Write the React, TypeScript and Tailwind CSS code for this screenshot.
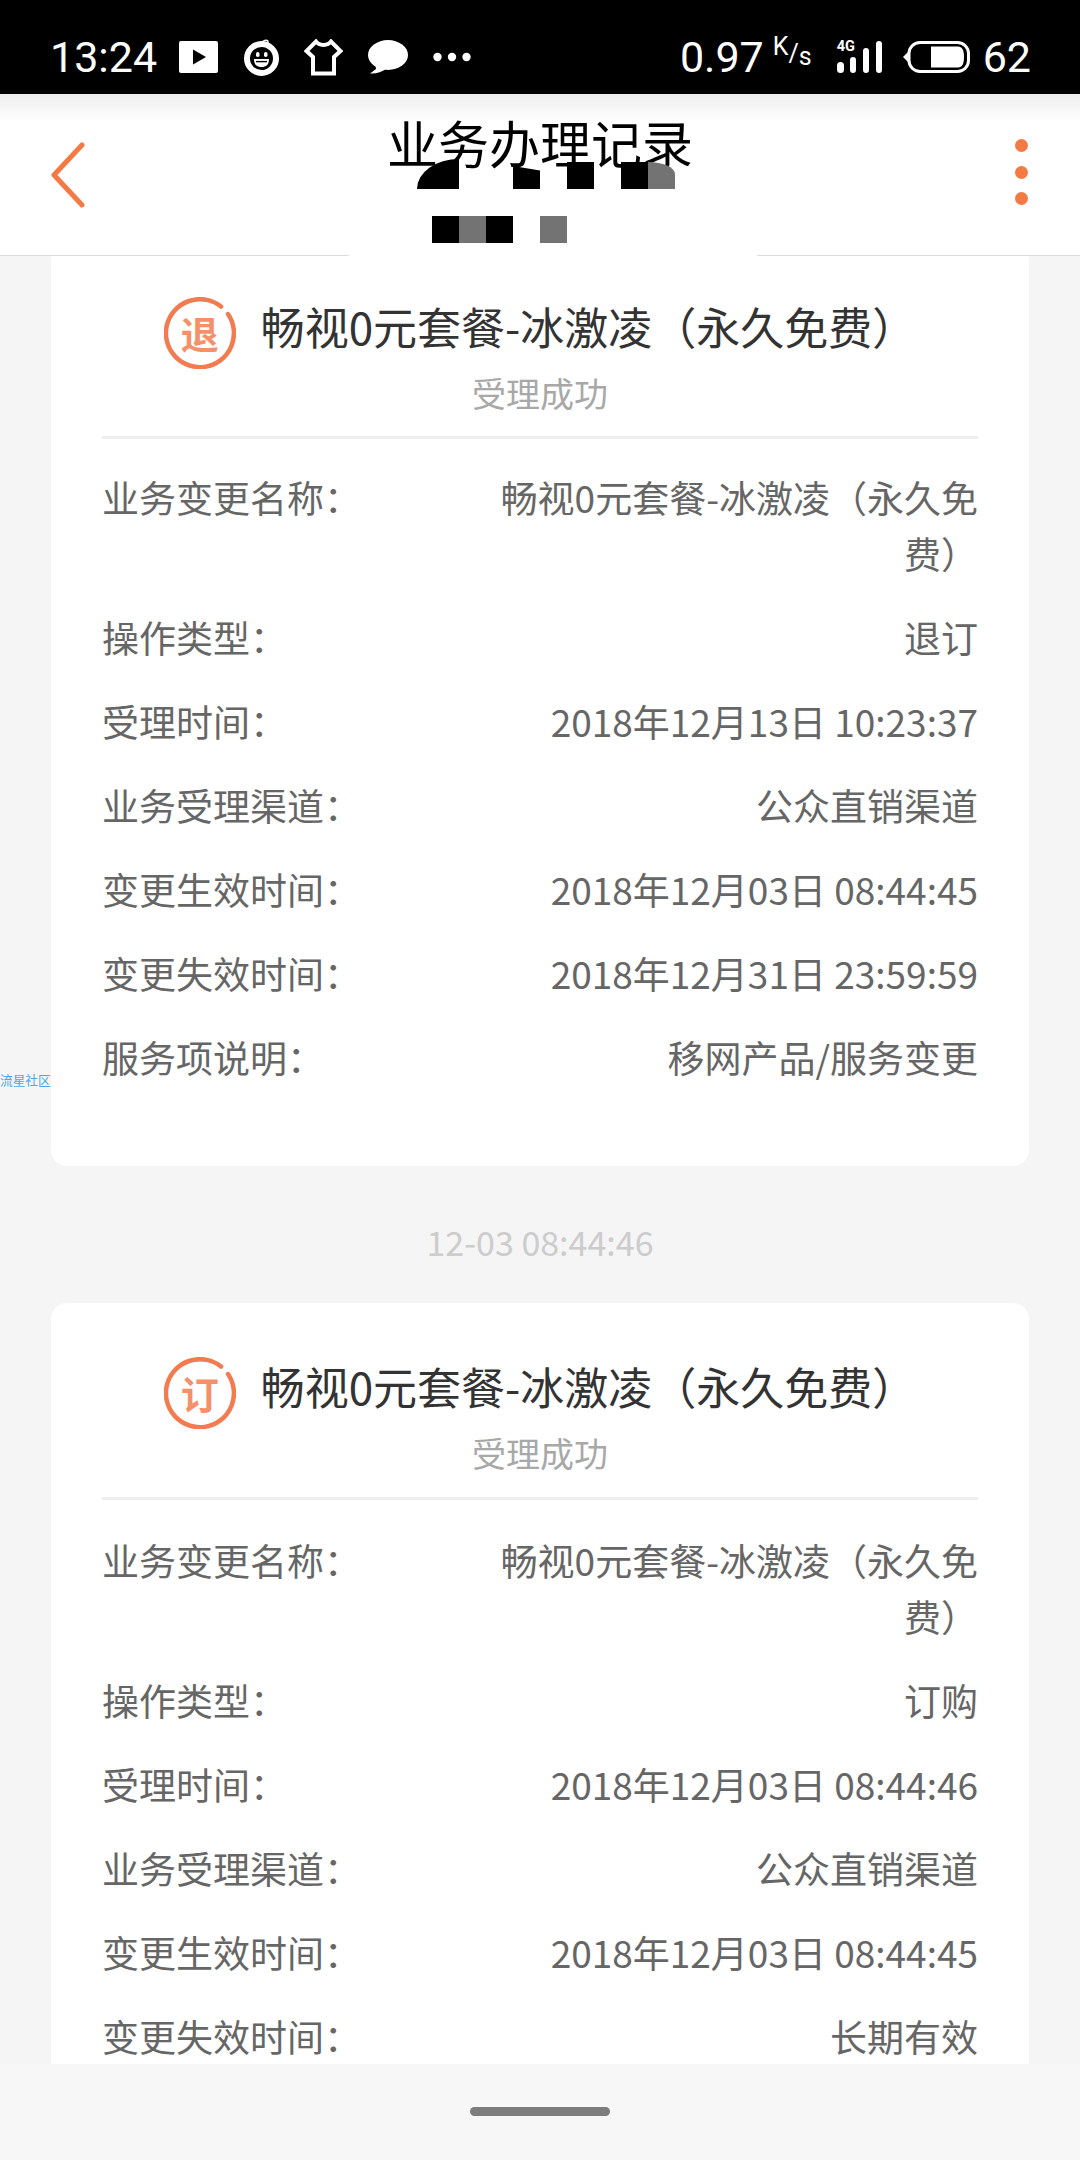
const cjk = "font-['Noto_Sans_CJK_SC','Noto_Sans',sans-serif]";

type Row = { label: string; value: string };

const firstRows: Row[] = [
  { label: '业务变更名称：', value: '畅视0元套餐-冰激凌（永久免费）' },
  { label: '操作类型：', value: '退订' },
  { label: '受理时间：', value: '2018年12月13日 10:23:37' },
  { label: '业务受理渠道：', value: '公众直销渠道' },
  { label: '变更生效时间：', value: '2018年12月03日 08:44:45' },
  { label: '变更失效时间：', value: '2018年12月31日 23:59:59' },
  { label: '服务项说明：', value: '移网产品/服务变更' },
];

const secondRows: Row[] = [
  { label: '业务变更名称：', value: '畅视0元套餐-冰激凌（永久免费）' },
  { label: '操作类型：', value: '订购' },
  { label: '受理时间：', value: '2018年12月03日 08:44:46' },
  { label: '业务受理渠道：', value: '公众直销渠道' },
  { label: '变更生效时间：', value: '2018年12月03日 08:44:45' },
  { label: '变更失效时间：', value: '长期有效' },
];

function Badge({ text }: { text: string }) {
  return (
    <div className="relative mt-[10px] w-[72px] h-[72px] flex items-center justify-center shrink-0">
      <svg className="absolute inset-0" width="72" height="72" viewBox="0 0 72 72" fill="none">
        <path d="M57 9.5 A34 34 0 1 0 64 17" stroke="#f27c50" strokeWidth="4.5" strokeLinecap="round" />
      </svg>
      <span className="text-[38px] leading-none font-bold text-[#f4916b]">{text}</span>
    </div>
  );
}

function Card({ badge, rows, second }: { badge: string; rows: Row[]; second?: boolean }) {
  return (
    <div className="bg-white rounded-[16px] px-[51px] pt-[49px] pb-[81px]">
      <div className="flex items-center justify-center gap-[25px] h-[72px]">
        <Badge text={badge} />
        <span className="mb-[4px] text-[44px] leading-[56px] text-[#333333]">畅视0元套餐-冰激凌（永久免费）</span>
      </div>
      <div className="mt-[5px] text-center text-[34px] leading-[48px] text-[#a8a8a8]">受理成功</div>
      <div className={second ? 'mt-[20px] h-[3px] bg-[#eeeeee]' : 'mt-[19px] h-[3px] bg-[#eeeeee]'} />
      <div className={second ? 'mt-[32px] flex flex-col gap-[28px]' : 'mt-[30px] flex flex-col gap-[28px]'}>
        {rows.map((row) => (
          <div key={row.label} className="flex justify-between text-[37px] leading-[56px] text-[#666666]">
            <span className="shrink-0">{row.label}</span>
            <span className="w-[490px] text-right">{row.value}</span>
          </div>
        ))}
      </div>
    </div>
  );
}

function StatusBar() {
  return (
    <div className="h-[94px] bg-black flex items-center justify-between pl-[50px] pr-[49px] pt-[20px] text-white font-['Roboto',sans-serif] text-[43px] leading-none">
      <div className="flex items-center">
        <span>13:24</span>
        <svg className="ml-[22px]" width="39" height="32" viewBox="0 0 39 32">
          <rect width="39" height="32" rx="2" fill="#fff" />
          <path d="M14 8.5 L27 16 L14 23.5 Z" fill="#000" />
        </svg>
        <svg className="ml-[25px]" width="37" height="37" viewBox="0 0 37 37" fill="none">
          <circle cx="18.5" cy="19.5" r="14.5" stroke="#fff" strokeWidth="6" />
          <path d="M17 5 C19 1 25 0 25 3 C25 5 22 5 22 3" stroke="#fff" strokeWidth="1.5" />
          <rect x="13" y="13" width="3.5" height="5" rx="1.7" fill="#fff" />
          <rect x="21" y="13" width="3.5" height="5" rx="1.7" fill="#fff" />
          <path d="M11 20 H26 C26 26 23 28 18.5 28 C14 28 11 26 11 20 Z" fill="#fff" />
          <path d="M13 22.6 H24" stroke="#000" strokeWidth="1.4" />
        </svg>
        <svg className="ml-[24px]" width="39" height="37" viewBox="0 0 39 37" fill="none">
          <path d="M12 2.5 C15 7 24 7 27 2.5 L36.5 12 L30 18 V34.5 H9 V18 L2.5 12 Z" stroke="#fff" strokeWidth="4" />
        </svg>
        <svg className="ml-[25px]" width="40" height="34" viewBox="0 0 40 34">
          <ellipse cx="20" cy="15" rx="20" ry="15" fill="#fff" />
          <path d="M7 23 L8 29 L2 33.5 C8 34 14 32 18 29 Z" fill="#fff" />
        </svg>
        <svg className="ml-[25px]" width="38" height="10" viewBox="0 0 38 10">
          <circle cx="4.5" cy="5" r="4.2" fill="#fff" />
          <circle cx="19" cy="5" r="4.2" fill="#fff" />
          <circle cx="33.5" cy="5" r="4.2" fill="#fff" />
        </svg>
      </div>
      <div className="flex items-center">
        <span>0.97</span>
        <span className="ml-[9px] text-[25px] relative -top-[4px]">
          <span className="relative -top-[7px]">K</span>/<span className="relative top-[3px]">s</span>
        </span>
        <div className="relative ml-[25px] w-[45px] h-[33px]">
          <span className="absolute left-0 top-0 text-[14.5px] leading-[12px] font-bold">4G</span>
          <svg className="absolute inset-0" width="45" height="33" viewBox="0 0 45 33">
            <rect x="0" y="21" width="7" height="11" rx="3.5" fill="#fff" />
            <rect x="13" y="16" width="6" height="16" rx="3" fill="#fff" />
            <rect x="26" y="7" width="6" height="25" rx="3" fill="#fff" />
            <rect x="39" y="0" width="6" height="32" rx="3" fill="#fff" />
          </svg>
        </div>
        <svg className="ml-[20px]" width="68" height="32" viewBox="0 0 68 32" fill="none">
          <rect x="7" y="1.5" width="59.5" height="29" rx="11" stroke="#fff" strokeWidth="3" />
          <path d="M6 11 L1 16 L6 21 Z" fill="#fff" />
          <path d="M29 5.5 H56 C60 5.5 62 9 62 16 C62 23 60 26.5 56 26.5 H29 Z" fill="#fff" />
        </svg>
        <span className="ml-[13px]">62</span>
      </div>
    </div>
  );
}

function NavBar() {
  return (
    <div className="relative h-[162px] bg-white border-b border-[#dddddd] grid grid-cols-[1fr_auto_1fr] items-center px-[49px]">
      <div className="absolute inset-x-0 top-0 h-[28px] bg-gradient-to-b from-[#eeeeee] to-white" />
      <svg width="36" height="66" viewBox="0 0 36 66" fill="none">
        <path d="M33 3 L5 33 L33 63" stroke="#f47a45" strokeWidth="5" strokeLinecap="round" strokeLinejoin="round" />
      </svg>
      <div className="relative self-start pt-[18px] text-[51px] leading-[60px] text-black">业务办理记录</div>
      <div className="justify-self-end pr-[3px] flex flex-col gap-[13.5px] -mt-[5px]">
        <div className="w-[13px] h-[13px] rounded-full bg-[#f47a45]" />
        <div className="w-[13px] h-[13px] rounded-full bg-[#f47a45]" />
        <div className="w-[13px] h-[13px] rounded-full bg-[#f47a45]" />
      </div>
    </div>
  );
}

// blocks that censor the account number under the title
function Mosaic() {
  return (
    <div className="absolute left-[349px] top-[159px] w-[408px] h-[99px]">
      <div className="absolute left-0 right-0 top-[57px] h-[42px] bg-white" />
      <div className="absolute left-[68px] top-0 w-[42px] h-[30px] bg-black rounded-tl-[100%]" />
      <div className="absolute left-[164px] top-[7px] w-[27px] h-[23px] bg-black [clip-path:polygon(0_0,100%_20%,100%_100%,0_100%)]" />
      <div className="absolute left-[218px] top-[3px] w-[27px] h-[27px] bg-black" />
      <div className="absolute left-[272px] top-[3px] w-[27px] h-[27px] bg-black" />
      <div className="absolute left-[299px] top-[3px] w-[27px] h-[27px] bg-[#737373] rounded-tr-[100%_45%]" />
      <div className="absolute left-[83px] top-[57px] w-[27px] h-[27px] bg-black" />
      <div className="absolute left-[110px] top-[57px] w-[27px] h-[27px] bg-[#737373]" />
      <div className="absolute left-[137px] top-[57px] w-[27px] h-[27px] bg-black" />
      <div className="absolute left-[191px] top-[57px] w-[27px] h-[27px] bg-[#737373]" />
    </div>
  );
}

export default function App() {
  return (
    <div className={`relative w-[1080px] h-[2160px] overflow-hidden flex flex-col bg-[#f5f5f5] ${cjk}`}>
      <StatusBar />
      <NavBar />
      <Mosaic />

      <div className="flex-1 overflow-hidden px-[51px]">
        <div className="-mt-[13px]">
          <Card badge="退" rows={firstRows} />
          <div className="h-[137px] pt-[15px] flex items-center justify-center text-[34px] leading-none text-[#cccccc]">
            12-03 08:44:46
          </div>
          <Card badge="订" rows={secondRows} second />
        </div>
      </div>

      <div className="h-[96px] bg-[#f7f7f7] flex items-center justify-center">
        <div className="w-[140px] h-[9px] rounded-full bg-[#7d7d7d] -mt-[2px]" />
      </div>

      <div className="absolute left-0 top-[1072px] w-[51px] whitespace-nowrap text-[12.7px] leading-[16px] text-[#4aa8e8]">
        流星社区
      </div>
    </div>
  );
}
